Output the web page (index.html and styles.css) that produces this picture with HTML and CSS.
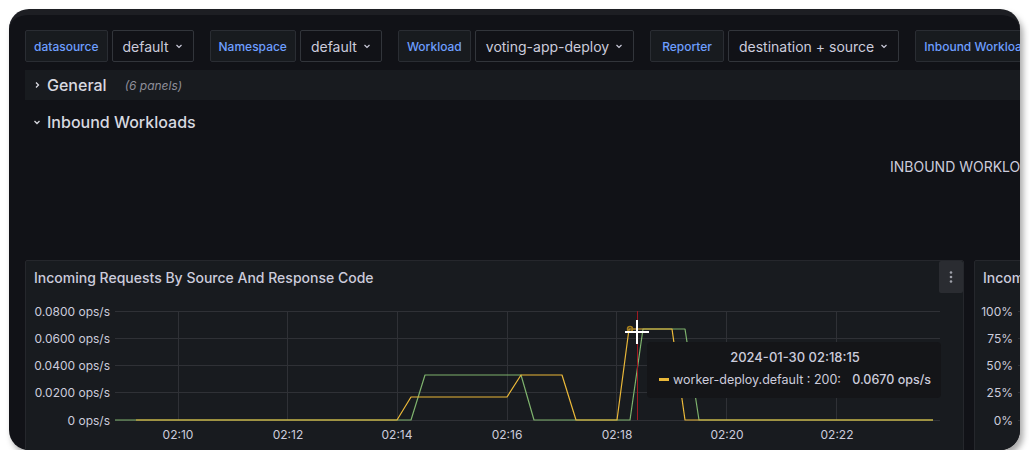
FILE: index.html
```html
<!DOCTYPE html>
<html>
<head>
<meta charset="utf-8">
<link rel="stylesheet" href="styles.css">
</head>
<body>
<div class="frame">
  <div class="content">
    <div class="vars">
      <div class="var"><span class="vlabel">datasource</span><span class="vvalue">default <svg class="chev" viewBox="0 0 8 8"><path d="M1.5 3 L4 5.5 L6.5 3"/></svg></span></div>
      <div class="var"><span class="vlabel">Namespace</span><span class="vvalue">default <svg class="chev" viewBox="0 0 8 8"><path d="M1.5 3 L4 5.5 L6.5 3"/></svg></span></div>
      <div class="var"><span class="vlabel">Workload</span><span class="vvalue">voting-app-deploy <svg class="chev" viewBox="0 0 8 8"><path d="M1.5 3 L4 5.5 L6.5 3"/></svg></span></div>
      <div class="var"><span class="vlabel vlabel-wide">Reporter</span><span class="vvalue">destination + source <svg class="chev" viewBox="0 0 8 8"><path d="M1.5 3 L4 5.5 L6.5 3"/></svg></span></div>
      <div class="var"><span class="vlabel">Inbound Workloads</span><span class="vvalue">All</span></div>
    </div>

    <div class="row row-collapsed">
      <svg class="rchev" viewBox="0 0 8 8"><path d="M3 1.5 L5.5 4 L3 6.5"/></svg>
      <span class="rtitle">General</span>
      <span class="rcount">(6 panels)</span>
    </div>

    <div class="row row-open">
      <svg class="rchev" viewBox="0 0 8 8"><path d="M1.5 3 L4 5.5 L6.5 3"/></svg>
      <span class="rtitle">Inbound Workloads</span>
    </div>

    <div class="textpanel">INBOUND WORKLOADS</div>

    <div class="panels">
      <div class="panel p1">
        <div class="phead">
          <span class="ptitle">Incoming Requests By Source And Response Code</span>
          <span class="pmenu"><svg viewBox="0 0 4 14" width="4" height="14"><circle cx="2" cy="2.5" r="1.3"/><circle cx="2" cy="7" r="1.3"/><circle cx="2" cy="11.5" r="1.3"/></svg></span>
        </div>
        <svg class="chart" width="937" height="160" viewBox="26 293 937 160">
          <g class="grid">
            <line x1="115" y1="311.5" x2="940" y2="311.5"/>
            <line x1="115" y1="338.5" x2="940" y2="338.5"/>
            <line x1="115" y1="365.5" x2="940" y2="365.5"/>
            <line x1="115" y1="392.5" x2="940" y2="392.5"/>
            <line x1="115" y1="420.5" x2="940" y2="420.5"/>
            <line x1="178.5" y1="311" x2="178.5" y2="420"/>
            <line x1="287.5" y1="311" x2="287.5" y2="420"/>
            <line x1="397.5" y1="311" x2="397.5" y2="420"/>
            <line x1="507.5" y1="311" x2="507.5" y2="420"/>
            <line x1="616.5" y1="311" x2="616.5" y2="420"/>
            <line x1="726.5" y1="311" x2="726.5" y2="420"/>
            <line x1="836.5" y1="311" x2="836.5" y2="420"/>
          </g>
          <g class="ylab">
            <text x="110" y="315.5">0.0800 ops/s</text>
            <text x="110" y="342.5">0.0600 ops/s</text>
            <text x="110" y="369.5">0.0400 ops/s</text>
            <text x="110" y="396.5">0.0200 ops/s</text>
            <text x="110" y="424.5">0 ops/s</text>
          </g>
          <g class="xlab">
            <text x="178" y="439">02:10</text>
            <text x="288" y="439">02:12</text>
            <text x="397" y="439">02:14</text>
            <text x="507" y="439">02:16</text>
            <text x="617" y="439">02:18</text>
            <text x="727" y="439">02:20</text>
            <text x="837" y="439">02:22</text>
          </g>
          <polyline class="green" points="115,420 411,420 425,375 521,375 534,420 630,420 643,329 685,329 699,420 933,420"/>
          <polyline class="yellow" points="136,420 397,420 411,397 507,397 521,375 562,375 576,420 617,420 629,329 672,329 685,420 933,420"/>
          <line class="redline" x1="637.5" y1="311" x2="637.5" y2="420"/>
          <circle class="pt" cx="630" cy="329" r="2.5"/>
          <line class="cross" x1="625" y1="332" x2="649" y2="332"/>
          <line class="cross" x1="637" y1="320" x2="637" y2="344"/>
        </svg>
        <div class="tooltip">
          <div class="ttime">2024-01-30 02:18:15</div>
          <div class="trow"><span class="tdash"></span><span class="tname">worker-deploy.default : 200:</span><span class="tval">0.0670 ops/s</span></div>
        </div>
      </div>
      <div class="panel p2">
        <div class="phead">
          <span class="ptitle">Incoming Success Rate (non-5xx responses) By Source</span>
        </div>
        <svg class="chart" width="300" height="160" viewBox="975 293 300 160">
          <g class="ylab">
            <text x="1013" y="315.5">100%</text>
            <text x="1013" y="342.5">75%</text>
            <text x="1013" y="369.5">50%</text>
            <text x="1013" y="396.5">25%</text>
            <text x="1013" y="424.5">0%</text>
          </g>
          <g class="grid">
            <line x1="1018" y1="311.5" x2="1100" y2="311.5"/>
            <line x1="1018" y1="338.5" x2="1100" y2="338.5"/>
            <line x1="1018" y1="365.5" x2="1100" y2="365.5"/>
            <line x1="1018" y1="392.5" x2="1100" y2="392.5"/>
            <line x1="1018" y1="420.5" x2="1100" y2="420.5"/>
          </g>
        </svg>
      </div>
    </div>
  </div>
</div>
</body>
</html>
```

FILE: styles.css
```css
* { box-sizing: border-box; }
html, body { margin: 0; padding: 0; background: #ffffff; }
body {
  font-family: Inter, "Noto Sans", "Liberation Sans", sans-serif;
  color: #ccccdc;
}
.frame {
  margin: 9px 0 0 9px;
  width: 1011px;
  height: 441px;
  border-radius: 20px;
  overflow: hidden;
  background: #111217;
  border-top: 6px solid #1d1e23;
  box-shadow: 3px 5px 6px rgba(0, 0, 0, 0.35);
}
.content {
  padding: 15px 0 0 16px;
  width: 1400px;
}
.vars {
  display: flex;
  gap: 16px;
  height: 32px;
}
.var {
  display: flex;
  gap: 4px;
  flex: none;
}
.vlabel {
  display: flex;
  align-items: center;
  padding: 0 8px;
  height: 32px;
  font-size: 12px;
  font-weight: 500;
  color: #6e9fff;
  background: #181b1f;
  border: 1px solid #2a2d33;
  border-radius: 2px;
}
.vlabel-wide { padding: 0 11px; }
.vvalue {
  display: flex;
  align-items: center;
  gap: 6px;
  padding: 0 10px;
  height: 32px;
  font-size: 14px;
  color: #ccccdc;
  background: #111217;
  border: 1px solid #32353b;
  border-radius: 2px;
}
.chev {
  width: 8px;
  height: 8px;
  fill: none;
  stroke: #ccccdc;
  stroke-width: 1.2;
}
.row {
  display: flex;
  align-items: center;
  height: 30px;
  width: 995px;
}
.row-collapsed {
  margin-top: 8px;
  background: #181b1f;
}
.row-open {
  margin-top: 7px;
}
.rchev {
  width: 8px;
  height: 8px;
  margin: 0 6px 0 8px;
  fill: none;
  stroke: #d8d9e0;
  stroke-width: 1.3;
}
.rtitle {
  font-size: 16px;
  font-weight: 500;
  color: #d8d9e0;
}
.rcount {
  margin-left: 18px;
  font-size: 12px;
  font-style: italic;
  color: #8e8e99;
}
.textpanel {
  height: 123px;
  padding: 21px 0 0 865px;
  font-size: 14px;
  color: #ccccdc;
  white-space: nowrap;
}
.panels {
  display: flex;
  gap: 10px;
}
.panel {
  position: relative;
  flex: none;
  height: 220px;
  background: #181b1f;
  border: 1px solid #25272c;
  border-radius: 2px;
  overflow: hidden;
}
.p1 { width: 939px; }
.p2 { width: 300px; }
.phead {
  display: flex;
  align-items: center;
  justify-content: space-between;
  height: 32px;
  padding-left: 8px;
}
.ptitle {
  font-size: 14px;
  font-weight: 500;
  color: #ccccdc;
  white-space: nowrap;
}
.pmenu {
  display: flex;
  align-items: center;
  justify-content: center;
  width: 24px;
  height: 32px;
  background: #2a2c31;
  border-radius: 2px;
}
.pmenu svg { fill: #9fa1aa; }
.chart { display: block; }
.grid line {
  stroke: #2f3136;
  stroke-width: 1;
}
.ylab text {
  font-family: Inter, "Noto Sans", sans-serif;
  font-size: 12px;
  fill: #ccccdc;
  text-anchor: end;
}
.xlab text {
  font-family: Inter, "Noto Sans", sans-serif;
  font-size: 12px;
  fill: #ccccdc;
  text-anchor: middle;
}
.green {
  fill: none;
  stroke: #7eb26d;
  stroke-width: 1.2;
  stroke-linejoin: round;
}
.yellow {
  fill: none;
  stroke: #eab839;
  stroke-width: 1.2;
  stroke-linejoin: round;
}
.redline {
  stroke: #9e1a22;
  stroke-width: 1;
}
.pt {
  fill: none;
  stroke: #a47e1e;
  stroke-width: 1.5;
}
.cross {
  stroke: #ffffff;
  stroke-width: 2;
}
.tooltip {
  position: absolute;
  left: 621px;
  top: 81px;
  width: 294px;
  height: 56px;
  background: #141518;
  border-radius: 4px;
  padding: 8px 10px 0 12px;
}
.ttime {
  text-align: center;
  font-size: 13px;
  font-weight: 500;
  color: #ccccdc;
  line-height: 15px;
}
.trow {
  display: flex;
  align-items: center;
  margin-top: 7px;
  font-size: 12.5px;
  color: #ccccdc;
  line-height: 15px;
}
.tdash {
  width: 10px;
  height: 3px;
  background: #eab839;
  margin-right: 4px;
}
.tname { flex: 1; }
.tval { font-weight: 500; }
```
